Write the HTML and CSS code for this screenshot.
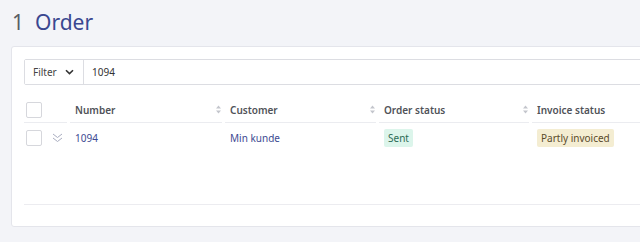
FILE: index.html
```html
<!DOCTYPE html>
<html lang="en">

<head>
  <meta charset="UTF-8" />
  <title>Order</title>
  <link rel="stylesheet" href="styles.css">
</head>

<body>
  <h1 class="page-title"><span class="count">1</span><span class="name">Order</span></h1>

  <div class="card">
    <div class="filter">
      <button class="filter-button">Filter
        <svg class="chevron" width="9" height="6" viewBox="0 0 9 6"><path d="M1 1.2 L4.5 4.6 L8 1.2" fill="none" stroke="#333" stroke-width="1.6"/></svg>
      </button>
      <div class="filter-value">1094</div>
    </div>

    <div class="table">
      <div class="row head">
        <div class="cell check"><span class="checkbox"></span></div>
        <div class="cell expand"></div>
        <div class="cell col">Number
          <svg class="sort" width="5" height="9" viewBox="0 0 5 9"><path d="M0 3.5 L2.5 0.5 L5 3.5 Z M0 5.5 L5 5.5 L2.5 8.5 Z" fill="#c3c5cc"/></svg>
        </div>
        <div class="cell col">Customer
          <svg class="sort" width="5" height="9" viewBox="0 0 5 9"><path d="M0 3.5 L2.5 0.5 L5 3.5 Z M0 5.5 L5 5.5 L2.5 8.5 Z" fill="#c3c5cc"/></svg>
        </div>
        <div class="cell col">Order status
          <svg class="sort" width="5" height="9" viewBox="0 0 5 9"><path d="M0 3.5 L2.5 0.5 L5 3.5 Z M0 5.5 L5 5.5 L2.5 8.5 Z" fill="#c3c5cc"/></svg>
        </div>
        <div class="cell col">Invoice status
          <svg class="sort" width="5" height="9" viewBox="0 0 5 9"><path d="M0 3.5 L2.5 0.5 L5 3.5 Z M0 5.5 L5 5.5 L2.5 8.5 Z" fill="#c3c5cc"/></svg>
        </div>
      </div>
      <div class="row">
        <div class="cell check"><span class="checkbox"></span></div>
        <div class="cell expand">
          <svg width="11" height="10" viewBox="0 0 11 10"><path d="M1 1 L5.5 4.5 L10 1 M1 5 L5.5 8.5 L10 5" fill="none" stroke="#a9adc0" stroke-width="1"/></svg>
        </div>
        <div class="cell col"><span class="link">1094</span></div>
        <div class="cell col"><span class="link">Min kunde</span></div>
        <div class="cell col"><span class="badge sent">Sent</span></div>
        <div class="cell col"><span class="badge partly">Partly invoiced</span></div>
      </div>
    </div>
    <div class="table-end"></div>
  </div>
</body>

</html>
```

FILE: styles.css
```css
body {
  margin: 0;
  background-color: #f3f4f8;
  font-family: "Noto Sans", sans-serif;
  color: #333;
  overflow: hidden;
}

.page-title {
  margin: 0;
  padding: 6px 12px 7px 12px;
  font-size: 21px;
  font-weight: 400;
  line-height: 33px;
  display: flex;
  gap: 11px;
}

.page-title .count {
  color: #5a5d66;
}

.page-title .name {
  color: #3a4790;
}

.card {
  background: #fff;
  border: 1px solid #e4e5eb;
  border-radius: 3px;
  margin: 0 -80px 0 11px;
  padding: 12px 12px 22px;
  height: 181px;
  box-sizing: border-box;
}

.filter {
  display: flex;
  height: 26px;
  border: 1px solid #dcdde2;
  border-radius: 2px;
  box-sizing: border-box;
}

.filter-button {
  display: flex;
  align-items: center;
  gap: 8px;
  width: 59px;
  padding: 0 0 0 8px;
  border: none;
  border-right: 1px solid #dcdde2;
  background: #fff;
  font-family: inherit;
  font-size: 10px;
  color: #444;
}

.filter-value {
  padding-left: 8px;
  font-size: 10px;
  line-height: 24px;
  color: #333;
}

.table {
  margin-top: 11px;
}

.row {
  display: grid;
  grid-template-columns: 23px 20px 155px 154px 153px 154px;
  align-items: center;
  height: 27px;
}

.row.head .cell {
  align-self: stretch;
  background: linear-gradient(#ebecf0, #ebecf0) left bottom / 100% 1px no-repeat;
}

.row.head .cell.col {
  font-weight: 600;
  color: #505258;
  background-position: 3px bottom;
  background-size: calc(100% - 3px) 1px;
}

.cell {
  font-size: 10px;
  display: flex;
  align-items: center;
}

.cell.col {
  padding-left: 8px;
  justify-content: space-between;
}

.cell.expand {
  justify-content: center;
  padding-top: 1px;
}

.checkbox {
  display: block;
  width: 14px;
  height: 14px;
  margin-left: 2px;
  border: 1px solid #d6d7dc;
  border-radius: 2px;
  background: #fff;
}

.sort {
  display: block;
  margin-right: 1px;
}

.row:not(.head) {
  padding-top: 1px;
}

.link {
  color: #3d4a92;
}

.badge {
  display: inline-block;
  padding: 0 4px;
  line-height: 18px;
  border-radius: 2px;
}

.badge.sent {
  background: #dcf5eb;
  color: #2c6b55;
}

.badge.partly {
  background: #f4edd2;
  color: #5a4b2a;
}

.table-end {
  margin-top: 53px;
  border-top: 1px solid #ececf0;
}
```
